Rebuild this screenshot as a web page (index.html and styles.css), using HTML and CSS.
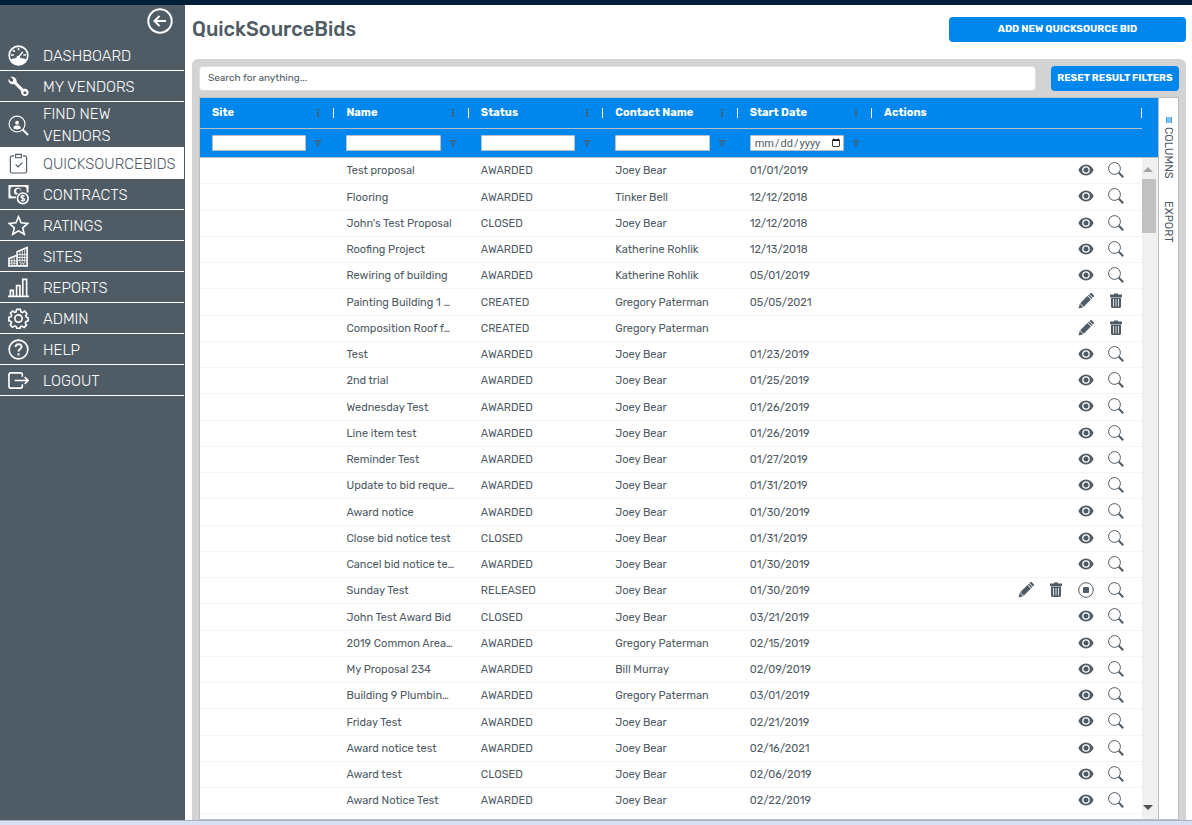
FILE: index.html
```
<!DOCTYPE html>
<html lang="en">
<head>
    <meta charset="UTF-8">
    <meta name="viewport" content="width=device-width, initial-scale=1.0">
    <title>QuickSourceBids</title>
    <link rel="stylesheet" href="styles.css">
</head>
<body>
    <!-- Icon set -->
    <svg class="icon-defs" aria-hidden="true">
        <symbol id="i-eye" viewBox="0 0 16 16">
            <path fill="currentColor" fill-rule="evenodd" d="M8 2.6C4.6 2.6 1.8 4.8.4 8c1.400 3.200 4.200 5.400 7.600 5.400s6.200-2.200 7.600-5.400C14.200 4.800 11.400 2.600 8 2.600zM8 4.200a3.800 3.800 0 1 1 0 7.600 3.800 3.800 0 0 1 0-7.600z"/>
            <circle cx="8" cy="8" r="2.500" fill="currentColor"/>
        </symbol>
        <symbol id="i-search" viewBox="0 0 16 16">
            <circle cx="6.500" cy="6.500" r="5.900" fill="none" stroke="currentColor"/>
            <path d="M10.800 10.800l4.400 4.400" stroke="currentColor" stroke-width="2"/>
        </symbol>
        <symbol id="i-edit" viewBox="0 0 16 16">
            <path fill="currentColor" d="M.5 15.500l1.300-4.700 3.400 3.400zM2.200 10.300l7.200-7.200 3.500 3.500L5.700 13.800zM10 2.500l1-1 3.500 3.500-1 1zM11.500 1l.8-.7c.5-.4 1-.4 1.500 0l1.900 1.900c.4.500.4 1 0 1.500l-.7.800z"/>
        </symbol>
        <symbol id="i-trash" viewBox="0 0 16 16">
            <path fill="currentColor" fill-rule="evenodd" d="M2 1.500h4V.5h4v1h4v2.700H2zM3 4.800h10v8.700c0 .9-.6 1.500-1.500 1.500h-7C3.600 15 3 14.400 3 13.500zM5.200 6v7.500h.8V6zM7.600 6v7.500h.8V6zM10 6v7.500h.8V6z"/>
        </symbol>
        <symbol id="i-stop" viewBox="0 0 16 16">
            <circle cx="8" cy="8" r="7.300" fill="none" stroke="currentColor"/>
            <rect x="5" y="5" width="6" height="6" rx="1" fill="currentColor"/>
        </symbol>
        <symbol id="i-filter" viewBox="0 0 8 8">
            <path d="M1 1.500h6L4.700 4v2.600l-1.400.6V4z" fill="none" stroke="currentColor"/>
        </symbol>
    </svg>

    <div class="topbar"></div>

    <div class="layout">
        <nav class="sidebar">
            <button class="collapse" aria-label="Collapse menu">
                <svg viewBox="0 0 26 26"><circle cx="13" cy="13" r="11.700"/><path d="M19 13H8M12.500 8L7.500 13l5 5"/></svg>
            </button>
            <a href="#" class="nav-item">
                <svg viewBox="0 0 22 22"><circle class="medium" cx="11" cy="11" r="9.800"/><path class="solid" d="M2 15.500c4-2.500 14-2.500 18 0C18 19 15 21 11 21s-7-2-9-5.500z"/><path class="medium" d="M10.500 13.500L15.500 7M11 3v2.500M5.300 5.300l1.700 1.700M3 10.500h3M16 10.500h3"/><circle class="medium" cx="10.700" cy="13" r="1"/></svg>
                <span>DASHBOARD</span>
            </a>
            <a href="#" class="nav-item">
                <svg viewBox="0 0 22 22"><path class="solid" d="M2.500.8l3 2.700-.4 2-2 .4L.5 3.200C-.2 6.800 3 9.600 6.500 8.400l7.200 7.200c-.5 3 1.500 5.400 4 5.400 3.500 0 5-4 3-6.200-1.200-1.400-3-1.600-4.400-1.200L9 6.600C10 3 6 .0 2.500.8z"/><circle class="hole" cx="17.700" cy="17.500" r="1.600"/></svg>
                <span>MY VENDORS</span>
            </a>
            <a href="#" class="nav-item">
                <svg viewBox="0 0 22 22"><circle cx="9.500" cy="9.500" r="8.300"/><path class="thick" d="M15.500 15.500l5.500 5.500"/><circle class="solid" cx="9.500" cy="8" r="2"/><path class="solid" d="M5.500 14c0-4.500 8-4.500 8 0-2 1.500-6 1.500-8 0z"/></svg>
                <span>FIND NEW VENDORS</span>
            </a>
            <a href="#" class="nav-item active">
                <svg viewBox="0 0 22 22"><path d="M6.500 3H4.500C3.200 3 2.500 3.700 2.500 5v14c0 1.300.7 2 2 2h13c1.300 0 2-.7 2-2V5c0-1.300-.7-2-2-2h-2M8 1.500h6v3.500H8zM8 12l2.500 2.500L15 10"/></svg>
                <span>QUICKSOURCEBIDS</span>
            </a>
            <a href="#" class="nav-item">
                <svg viewBox="0 0 22 22"><path class="thick" d="M8.500 14H1.500V2h19v7"/><path class="solid" d="M1 1h5L1 6zM21 1h-5l5 5zM1 15v-5l5 5zM14 7a4 4 0 1 0-5.500 4.500z"/><circle class="hole" cx="11" cy="7.500" r="2.500"/><circle class="hole" cx="15.500" cy="15" r="7"/><circle class="medium" cx="15.500" cy="15" r="5.600"/><path d="M17.500 12.800c-1.500-1-4-.8-4 .8 0 2 4 .8 4 2.700 0 1.600-2.500 1.700-4 .7M15.500 11.300v7.400"/></svg>
                <span>CONTRACTS</span>
            </a>
            <a href="#" class="nav-item">
                <svg viewBox="0 0 22 22"><path class="medium" d="M11 1.800l2.700 6.400 7 .6-5.300 4.600 1.600 6.800-6-3.600-6 3.600 1.600-6.800L1.300 8.800l7-.6z"/></svg>
                <span>RATINGS</span>
            </a>
            <a href="#" class="nav-item">
                <svg viewBox="0 0 22 22"><path class="medium" d="M1 20.500V13l8-3M9.500 20.500V6L20 1.500v19M0 20.800h21"/><path d="M1 15.500h8M1 18h8M4 13v7M6.500 12v8M9.500 9H20M9.500 12H20M9.500 15H20M12.500 5v13M15 4v13M17.500 3v15M13.500 21v-3h3v3" stroke-width=".8"/></svg>
                <span>SITES</span>
            </a>
            <a href="#" class="nav-item">
                <svg viewBox="0 0 22 22"><path class="medium" d="M0 20.300h22M2.500 20v-6h3v6M9 20V9h3.500v11M15.500 20V2.500h4V20"/></svg>
                <span>REPORTS</span>
            </a>
            <a href="#" class="nav-item">
                <svg viewBox="0 0 22 22"><circle class="medium" cx="11" cy="11" r="3.800"/><path class="medium" d="M9 1.500h4l.7 2.700 1.400.6 2.500-1.500 2.300 2.800-1.300 2.200.5 1.300 2 .6v3.300l-2.300.7-.7 1.500 1.300 2.200-2.500 2.400-2.300-1.300-1.500.6-.6 1.800H9.300l-.7-2-1.500-.6-2.400 1.400-2.400-2.400 1.400-2.400-.6-1.400-2.200-.6V9.800l2.200-.6.700-1.400L2.500 5.500l2.300-2.300 2.300 1.400 1.300-.5z"/></svg>
                <span>ADMIN</span>
            </a>
            <a href="#" class="nav-item">
                <svg viewBox="0 0 22 22"><circle class="medium" cx="11" cy="11" r="9.800"/><path class="thick" d="M8 8.500C8 4.500 14.200 4.500 14.200 8.200c0 2.500-3.200 2.300-3.200 5M11 15v2.200"/></svg>
                <span>HELP</span>
            </a>
            <a href="#" class="nav-item">
                <svg viewBox="0 0 22 22"><path class="medium" d="M15 7V5c0-1.300-.7-2-2-2H3C1.700 3 1 3.700 1 5v12c0 1.300.7 2 2 2h10c1.300 0 2-.7 2-2v-2M7 11h14M17.500 7.500L21 11l-3.500 3.500"/></svg>
                <span>LOGOUT</span>
            </a>
        </nav>

        <main class="main">
            <header class="page-header">
                <h1>QuickSourceBids</h1>
                <button class="btn btn-add">ADD NEW QUICKSOURCE BID</button>
            </header>

            <section class="panel">
                <div class="toolbar">
                    <input type="text" class="search" placeholder="Search for anything..." aria-label="Search for anything">
                    <button class="btn btn-reset">RESET RESULT FILTERS</button>
                </div>

                <div class="grid">
                    <table class="bids">
                        <colgroup>
                            <col class="col"><col class="col"><col class="col"><col class="col"><col class="col"><col>
                        </colgroup>
                        <thead>
                            <tr class="titles">
                                <th><div class="th">Site<i class="dots"></i></div></th>
                                <th><div class="th">Name<i class="dots"></i></div></th>
                                <th><div class="th">Status<i class="dots"></i></div></th>
                                <th><div class="th">Contact Name<i class="dots"></i></div></th>
                                <th><div class="th">Start Date<i class="dots"></i></div></th>
                                <th><div class="th">Actions</div></th>
                            </tr>
                            <tr class="filters">
                                <td><div class="filter"><input type="text" aria-label="Site filter"><svg><use href="#i-filter"/></svg></div></td>
                                <td><div class="filter"><input type="text" aria-label="Name filter"><svg><use href="#i-filter"/></svg></div></td>
                                <td><div class="filter"><input type="text" aria-label="Status filter"><svg><use href="#i-filter"/></svg></div></td>
                                <td><div class="filter"><input type="text" aria-label="Contact name filter"><svg><use href="#i-filter"/></svg></div></td>
                                <td><div class="filter"><input type="date" aria-label="Start date filter"><svg><use href="#i-filter"/></svg></div></td>
                                <td></td>
                            </tr>
                        </thead>
                        <tbody id="bidRows"></tbody>
                    </table>
                    <div class="scroll">
                        <div class="scroll-head"></div>
                        <div class="scroll-track">
                            <span class="arrow-up"></span>
                            <span class="thumb"></span>
                            <span class="arrow-down"></span>
                        </div>
                    </div>
                    <div class="side-tabs">
                        <button><svg viewBox="0 0 6 6"><path d="M0 0h6v6H0zM0 2h6M0 4h6"/></svg>COLUMNS</button>
                        <button>EXPORT</button>
                    </div>
                </div>
            </section>
        </main>
    </div>
    <div class="bottombar"></div>

    <script>
        const bids = [
            ['Test proposal', 'AWARDED', 'Joey Bear', '01/01/2019'],
            ['Flooring', 'AWARDED', 'Tinker Bell', '12/12/2018'],
            ['John\'s Test Proposal', 'CLOSED', 'Joey Bear', '12/12/2018'],
            ['Roofing Project', 'AWARDED', 'Katherine Rohlik', '12/13/2018'],
            ['Rewiring of building', 'AWARDED', 'Katherine Rohlik', '05/01/2019'],
            ['Painting Building 1 …', 'CREATED', 'Gregory Paterman', '05/05/2021'],
            ['Composition Roof f…', 'CREATED', 'Gregory Paterman', ''],
            ['Test', 'AWARDED', 'Joey Bear', '01/23/2019'],
            ['2nd trial', 'AWARDED', 'Joey Bear', '01/25/2019'],
            ['Wednesday Test', 'AWARDED', 'Joey Bear', '01/26/2019'],
            ['Line item test', 'AWARDED', 'Joey Bear', '01/26/2019'],
            ['Reminder Test', 'AWARDED', 'Joey Bear', '01/27/2019'],
            ['Update to bid reque…', 'AWARDED', 'Joey Bear', '01/31/2019'],
            ['Award notice', 'AWARDED', 'Joey Bear', '01/30/2019'],
            ['Close bid notice test', 'CLOSED', 'Joey Bear', '01/31/2019'],
            ['Cancel bid notice te…', 'AWARDED', 'Joey Bear', '01/30/2019'],
            ['Sunday Test', 'RELEASED', 'Joey Bear', '01/30/2019'],
            ['John Test Award Bid', 'CLOSED', 'Joey Bear', '03/21/2019'],
            ['2019 Common Area…', 'AWARDED', 'Gregory Paterman', '02/15/2019'],
            ['My Proposal 234', 'AWARDED', 'Bill Murray', '02/09/2019'],
            ['Building 9 Plumbin…', 'AWARDED', 'Gregory Paterman', '03/01/2019'],
            ['Friday Test', 'AWARDED', 'Joey Bear', '02/21/2019'],
            ['Award notice test', 'AWARDED', 'Joey Bear', '02/16/2021'],
            ['Award test', 'CLOSED', 'Joey Bear', '02/06/2019'],
            ['Award Notice Test', 'AWARDED', 'Joey Bear', '02/22/2019']
        ];

        // Icons offered for each status
        const actions = {
            CREATED: ['edit', 'trash'],
            RELEASED: ['edit', 'trash', 'stop', 'search']
        };

        document.getElementById('bidRows').innerHTML = bids.map(([name, status, contact, date]) => {
            const icons = actions[status] || ['eye', 'search'];
            return `
                <tr>
                    <td></td>
                    <td>${name}</td>
                    <td>${status}</td>
                    <td>${contact}</td>
                    <td>${date}</td>
                    <td><div class="actions">${icons.map(i => `<button aria-label="${i}"><svg><use href="#i-${i}"/></svg></button>`).join('')}</div></td>
                </tr>
            `;
        }).join('');
    </script>
</body>
</html>
```
FILE: styles.css
```
* {
    box-sizing: border-box;
    margin: 0;
    padding: 0;
}

body {
    display: flex;
    flex-direction: column;
    height: 100vh;
    overflow: hidden;
    font-family: Rubik, Roboto, sans-serif;
    font-size: 11px;
    color: #4f5b65;
    background: white;
}

button, input {
    font-family: inherit;
    color: inherit;
}

button {
    border: none;
    background: none;
    cursor: pointer;
}

.icon-defs {
    display: none;
}

.topbar {
    flex: none;
    height: 5px;
    background: #011e38;
}

.bottombar {
    flex: none;
    height: 5px;
    border-top: 1px solid #adb1bd;
    background: #d6dff3;
}

.layout {
    display: flex;
    flex: 1;
    min-height: 0;
}

/* Sidebar */
.sidebar {
    flex: none;
    width: 185px;
    padding-right: 1px;
    background: #505c65;
    color: white;
}

.sidebar svg {
    flex: none;
    width: 21px;
    height: 21px;
    fill: none;
    stroke: currentColor;
    stroke-width: 1.2;
}

.sidebar .collapse {
    display: block;
    height: 35px;
    margin-left: auto;
    padding: 3px 11px 6px;
}

.sidebar .collapse svg {
    display: block;
    width: 26px;
    height: 26px;
    stroke-width: 2;
}

.sidebar .solid {
    fill: currentColor;
    stroke: none;
}

.sidebar .hole {
    fill: #505c65;
    stroke: none;
}

.sidebar .medium {
    stroke-width: 1.7;
}

.sidebar .thick {
    stroke-width: 2;
}

.nav-item {
    display: flex;
    align-items: center;
    gap: 14px;
    min-height: 31px;
    padding: 1px 8px 0;
    border-bottom: 1px solid white;
    color: white;
    font-size: 15px;
    font-weight: 300;
    line-height: 22px;
    text-decoration: none;
}

.nav-item.active {
    background: white;
    color: #4f5b65;
}

/* Main area */
.main {
    display: flex;
    flex-direction: column;
    flex: 1;
    min-width: 0;
    padding: 12px 6px 0 7px;
}

.page-header {
    display: flex;
    justify-content: space-between;
    height: 42px;
}

h1 {
    font-size: 20px;
    font-weight: 500;
    line-height: 25px;
}

.btn {
    height: 25px;
    padding-bottom: 2px;
    border-radius: 4px;
    background: #0087ee;
    color: white;
    font-size: 10px;
    font-weight: 700;
}

.btn-add {
    width: 237px;
}

.btn-reset {
    width: 128px;
}

.panel {
    display: flex;
    flex-direction: column;
    flex: 1;
    min-height: 0;
    padding: 7px 7px 0;
    border-radius: 6px 6px 0 0;
    background: #d3d3d3;
}

.toolbar {
    display: flex;
    gap: 15px;
    margin-bottom: 6px;
}

.search {
    flex: 1;
    height: 25px;
    padding: 0 8px 1px;
    border: 1px solid #dee0e6;
    border-radius: 4px;
    background: white;
    font-size: 10px;
}

.search::placeholder {
    color: #4f5b65;
}

/* Grid */
.grid {
    display: flex;
    flex: 1;
    min-height: 0;
    border: 1px solid #babfc7;
    overflow: hidden;
    background: white;
}

.bids {
    flex: 1;
    align-self: flex-start;
    width: 100%;
    min-width: 0;
    table-layout: fixed;
    border-collapse: separate;
    border-spacing: 0;
}

.col {
    width: 14.27%;
}

.titles th {
    height: 31px;
    padding-left: 12px;
    padding-bottom: 1px;
    border-bottom: 1px solid #babfc7;
    background: #0087ee;
    color: white;
    text-align: left;
    font-weight: 700;
}

.th {
    display: flex;
    align-items: center;
    justify-content: space-between;
    height: 10px;
    padding-right: 14px;
    border-right: 1px solid white;
}

.dots {
    height: 8px;
    border-left: 2px dotted #4f5b65;
}

.filters td {
    height: 29px;
    padding-left: 12px;
    border-bottom: 1px solid #babfc7;
    background: #0087ee;
}

.filter {
    display: flex;
    align-items: center;
    gap: 8px;
    padding-right: 12px;
}

.filter input {
    flex: 1;
    min-width: 0;
    height: 16px;
    border: 1px solid #babfc7;
    border-radius: 1px;
    background: white;
    font-size: 11px;
}

.filter input[type="date"] {
    padding: 0 2px 0 3px;
    font-family: Roboto, sans-serif;
}

.filter input::-webkit-calendar-picker-indicator {
    width: 10px;
    height: 10px;
    margin: 0;
    padding: 0;
}

.filter svg {
    flex: none;
    width: 8px;
    height: 8px;
}

.bids tbody td {
    height: 26px;
    padding: 1px 0 0 12px;
    border-bottom: 1px solid #f3f4f5;
    overflow: hidden;
    white-space: nowrap;
    line-height: 14px;
}

/* every fourth row carries the extra pixel of the row pitch */
.bids tbody tr:nth-child(4n+2) td {
    height: 27px;
}

.actions {
    display: flex;
    justify-content: flex-end;
    gap: 14px;
    padding: 0 18px 3px 0;
}

.actions svg {
    display: block;
    width: 16px;
    height: 16px;
}

/* Scrollbar */
.scroll {
    display: flex;
    flex-direction: column;
    flex: none;
    width: 16px;
}

.scroll-head {
    height: 60px;
    border-bottom: 1px solid #babfc7;
    background: #0087ee;
}

.scroll-track {
    display: flex;
    flex-direction: column;
    flex: 1;
    padding: 9px 2px 9px 0;
    background: #f0f0f0;
}

.arrow-up, .arrow-down {
    align-self: center;
    margin-right: 3px;
    border: 5px solid transparent;
}

.arrow-up {
    border-top: none;
    border-bottom-color: #a3a3a3;
}

.arrow-down {
    margin-top: auto;
    border-bottom: none;
    border-top-color: #505050;
}

.thumb {
    height: 54px;
    margin-top: 7px;
    background: #c1c1c1;
}

.side-tabs {
    display: flex;
    flex-direction: column;
    flex: none;
    gap: 22px;
    width: 20px;
    padding-top: 19px;
    border-left: 1px solid #babfc7;
}

.side-tabs button {
    display: flex;
    align-items: center;
    gap: 4px;
    width: 19px;
    writing-mode: vertical-rl;
    font-size: 11px;
}

.side-tabs svg {
    width: 6px;
    height: 6px;
    fill: none;
    stroke: #0087ee;
}
```
